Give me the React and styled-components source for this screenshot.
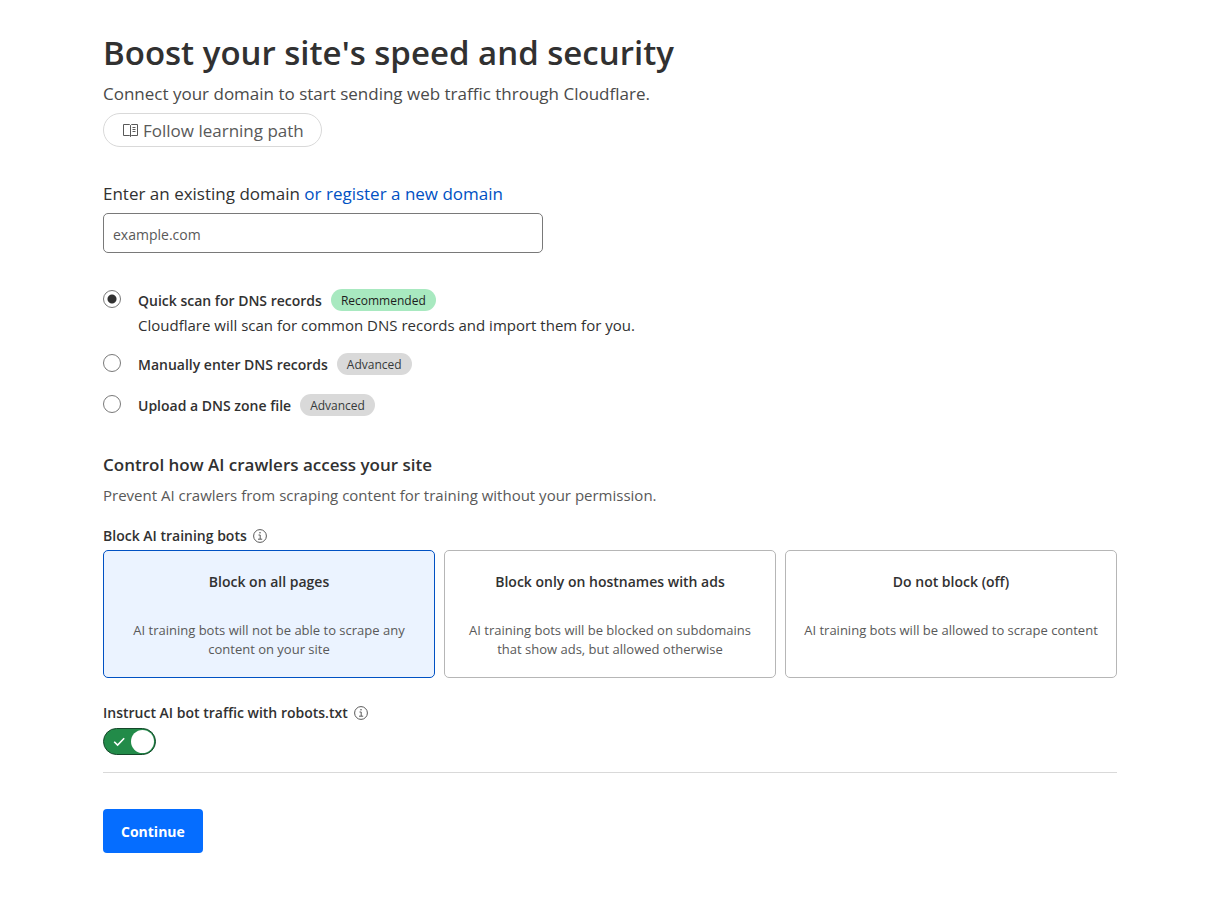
import React, { useState } from 'react'
import styled, { createGlobalStyle } from 'styled-components'

const GlobalStyle = createGlobalStyle`
  *,
  *::before,
  *::after {
    box-sizing: border-box;
  }

  body {
    margin: 0;
    background: #fff;
    color: #313131;
    font-family: 'Open Sans', 'Noto Sans', sans-serif;
    font-size: 14px;
    line-height: 20px;
  }

  h1,
  h2,
  p {
    margin: 0;
  }
`

const Page = styled.main`
  max-width: 1062px;
  margin: 0 auto;
  padding: 30px 24px 48px;
`

const Title = styled.h1`
  font-size: 33px;
  font-weight: 600;
  line-height: 46px;
`

const Subtitle = styled.p`
  margin-top: 6px;
  font-size: 17px;
  line-height: 24px;
  color: #4a4a4a;
`

const LearningPath = styled.button`
  display: flex;
  align-items: center;
  gap: 4px;
  height: 34px;
  margin-top: 7px;
  padding: 0 17px 0 18px;
  border: 1px solid #d9d9d9;
  border-radius: 17px;
  background: #fff;
  color: #595959;
  font-family: inherit;
  font-size: 17px;
  cursor: pointer;
`

const DomainField = styled.div`
  margin-top: 35px;
`

const DomainLabel = styled.div`
  font-size: 17px;
  line-height: 24px;

  a {
    color: #0051c3;
    text-decoration: none;
  }
`

const DomainInput = styled.input`
  display: block;
  width: 100%;
  max-width: 440px;
  height: 40px;
  margin-top: 7px;
  padding: 3px 9px 0;
  border: 1px solid #797979;
  border-radius: 5px;
  color: #313131;
  font-family: inherit;
  font-size: 14px;

  &::placeholder {
    color: #595959;
  }
`

const Fieldset = styled.fieldset`
  min-width: 0;
  margin: 0;
  padding: 0;
  border: 0;
`

const ScanOptions = styled(Fieldset)`
  display: flex;
  flex-direction: column;
  gap: 18px;
  margin-top: 36px;
`

const ScanOption = styled.label`
  display: flex;
  align-items: flex-start;
  gap: 17px;
  cursor: pointer;
`

const Radio = styled.input`
  appearance: none;
  flex: none;
  width: 18px;
  height: 18px;
  margin: 1px 0 0;
  border: 1px solid #797979;
  border-radius: 50%;
  background: #fff;

  &:checked {
    background: radial-gradient(circle, #313131 4px, #fff 5px);
  }
`

const ScanName = styled.span`
  display: flex;
  align-items: flex-start;
  gap: 9px;
  font-weight: 600;
  line-height: 23px;
`

const Badge = styled.span`
  padding: 2px 10px 0;
  border-radius: 11px;
  background: ${({ $recommended }) =>
    $recommended ? '#a8e9c0' : '#d9d9d9'};
  color: ${({ $recommended }) =>
    $recommended ? '#1d1d1d' : '#36393a'};
  font-size: 12px;
  font-weight: 400;
  line-height: 20px;
`

const ScanHint = styled.span`
  display: block;
  padding-top: 3px;
  font-size: 15px;
  line-height: 20px;
`

const SectionTitle = styled.h2`
  margin-top: 36px;
  font-size: 17px;
  font-weight: 600;
  line-height: 24px;
`

const SectionText = styled.p`
  margin-top: 8px;
  font-size: 15px;
  line-height: 20px;
  color: #595959;
`

const FieldTitle = styled.div`
  display: flex;
  align-items: center;
  gap: 6px;
  font-weight: 600;
  line-height: 20px;
`

const Legend = styled.legend`
  margin-bottom: 4px;
  padding: 0;
`

const BlockOptions = styled(Fieldset)`
  margin-top: 21px;
`

const Cards = styled.div`
  display: grid;
  grid-template-columns: repeat(auto-fit, minmax(260px, 1fr));
  gap: 9px;
`

const HiddenRadio = styled.input`
  position: absolute;
  opacity: 0;
  pointer-events: none;
`

const Card = styled.label`
  position: relative;
  padding: 21px 16px 18px;
  border: 1px solid #b6b6b6;
  border-radius: 5px;
  text-align: center;
  cursor: pointer;

  &:has(input:checked) {
    border-color: #0051c3;
    background: #ebf3ff;
  }
`

const CardName = styled.span`
  display: block;
  font-weight: 600;
`

const CardText = styled.span`
  display: block;
  margin-top: 29px;
  color: #595959;
  font-size: 13px;
  line-height: 19px;
`

const RobotsField = styled.div`
  margin-top: 25px;
  padding-bottom: 17px;
  border-bottom: 1px solid #d9d9d9;
`

const Switch = styled.button`
  display: flex;
  flex-direction: ${({ $on }) => ($on ? 'row' : 'row-reverse')};
  align-items: center;
  justify-content: space-between;
  width: 53px;
  height: 27px;
  margin-top: 5px;
  padding: 0 1px 0 9px;
  border: 1px solid #15472a;
  border-radius: 14px;
  background: ${({ $on }) => ($on ? '#228b49' : '#797979')};
  cursor: pointer;
`

const Knob = styled.span`
  width: 23px;
  height: 23px;
  border-radius: 50%;
  background: #fff;
`

const Continue = styled.button`
  height: 44px;
  margin-top: 36px;
  padding: 0 18px;
  border: 0;
  border-radius: 4px;
  background: #056dff;
  color: #fff;
  font-family: inherit;
  font-size: 14px;
  font-weight: 700;
  cursor: pointer;
`

const BookIcon = () => (
  <svg width='17' height='16' viewBox='0 0 17 16' fill='none' stroke='currentColor' aria-hidden='true'>
    <path d='M8.5 3.5 7.5 2.5h-6v11h6l1 1 1-1h6v-11h-6zv11' />
    <path d='M10.5 5.5h3M10.5 7.5h3M10.5 9.5h3' />
  </svg>
)

const InfoIcon = () => (
  <svg width='14' height='14' viewBox='0 0 14 14' fill='none' stroke='#595959' aria-hidden='true'>
    <circle cx='7' cy='7' r='6.4' />
    <path d='M5.5 6h1.7v4M5 10.2h4.2' />
    <circle cx='7' cy='3.8' r='.8' fill='#595959' stroke='none' />
  </svg>
)

const CheckIcon = () => (
  <svg width='13' height='10' viewBox='0 0 13 10' fill='none' stroke='#fff' strokeWidth='1.6' aria-hidden='true'>
    <path d='M1.2 4.8 4.6 8.1 11.2 1.3' />
  </svg>
)

const scanOptions = [
  {
    id: 'quick',
    name: 'Quick scan for DNS records',
    badge: 'Recommended',
    hint: 'Cloudflare will scan for common DNS records and import them for you.',
  },
  { id: 'manual', name: 'Manually enter DNS records', badge: 'Advanced' },
  { id: 'upload', name: 'Upload a DNS zone file', badge: 'Advanced' },
]

const blockOptions = [
  {
    id: 'all',
    name: 'Block on all pages',
    text: 'AI training bots will not be able to scrape any content on your site',
  },
  {
    id: 'ads',
    name: 'Block only on hostnames with ads',
    text: 'AI training bots will be blocked on subdomains that show ads, but allowed otherwise',
  },
  {
    id: 'off',
    name: 'Do not block (off)',
    text: 'AI training bots will be allowed to scrape content',
  },
]

const App = () => {
  const [scan, setScan] = useState('quick')
  const [block, setBlock] = useState('all')
  const [robots, setRobots] = useState(true)

  return (
    <Page>
      <GlobalStyle />
      <Title>Boost your site's speed and security</Title>
      <Subtitle>
        Connect your domain to start sending web traffic through Cloudflare.
      </Subtitle>
      <LearningPath type='button'>
        <BookIcon />
        Follow learning path
      </LearningPath>

      <DomainField>
        <DomainLabel>
          <label htmlFor='domain'>Enter an existing domain</label>{' '}
          <a href='#register'>or register a new domain</a>
        </DomainLabel>
        <DomainInput id='domain' type='text' placeholder='example.com' />
      </DomainField>

      <ScanOptions aria-label='DNS records'>
        {scanOptions.map(({ id, name, badge, hint }) => (
          <ScanOption key={id}>
            <Radio
              type='radio'
              name='scan'
              checked={scan === id}
              onChange={() => setScan(id)}
            />
            <span>
              <ScanName>
                {name}
                <Badge $recommended={badge === 'Recommended'}>{badge}</Badge>
              </ScanName>
              {hint && <ScanHint>{hint}</ScanHint>}
            </span>
          </ScanOption>
        ))}
      </ScanOptions>

      <SectionTitle>Control how AI crawlers access your site</SectionTitle>
      <SectionText>
        Prevent AI crawlers from scraping content for training without your
        permission.
      </SectionText>

      <BlockOptions>
        <Legend>
          <FieldTitle>
            Block AI training bots
            <InfoIcon />
          </FieldTitle>
        </Legend>
        <Cards>
          {blockOptions.map(({ id, name, text }) => (
            <Card key={id}>
              <HiddenRadio
                type='radio'
                name='block'
                checked={block === id}
                onChange={() => setBlock(id)}
              />
              <CardName>{name}</CardName>
              <CardText>{text}</CardText>
            </Card>
          ))}
        </Cards>
      </BlockOptions>

      <RobotsField>
        <FieldTitle>
          <span id='robots-label'>Instruct AI bot traffic with robots.txt</span>
          <InfoIcon />
        </FieldTitle>
        <Switch
          type='button'
          role='switch'
          aria-checked={robots}
          aria-labelledby='robots-label'
          $on={robots}
          onClick={() => setRobots(!robots)}
        >
          <CheckIcon />
          <Knob />
        </Switch>
      </RobotsField>

      <Continue type='button'>Continue</Continue>
    </Page>
  )
}

export default App
